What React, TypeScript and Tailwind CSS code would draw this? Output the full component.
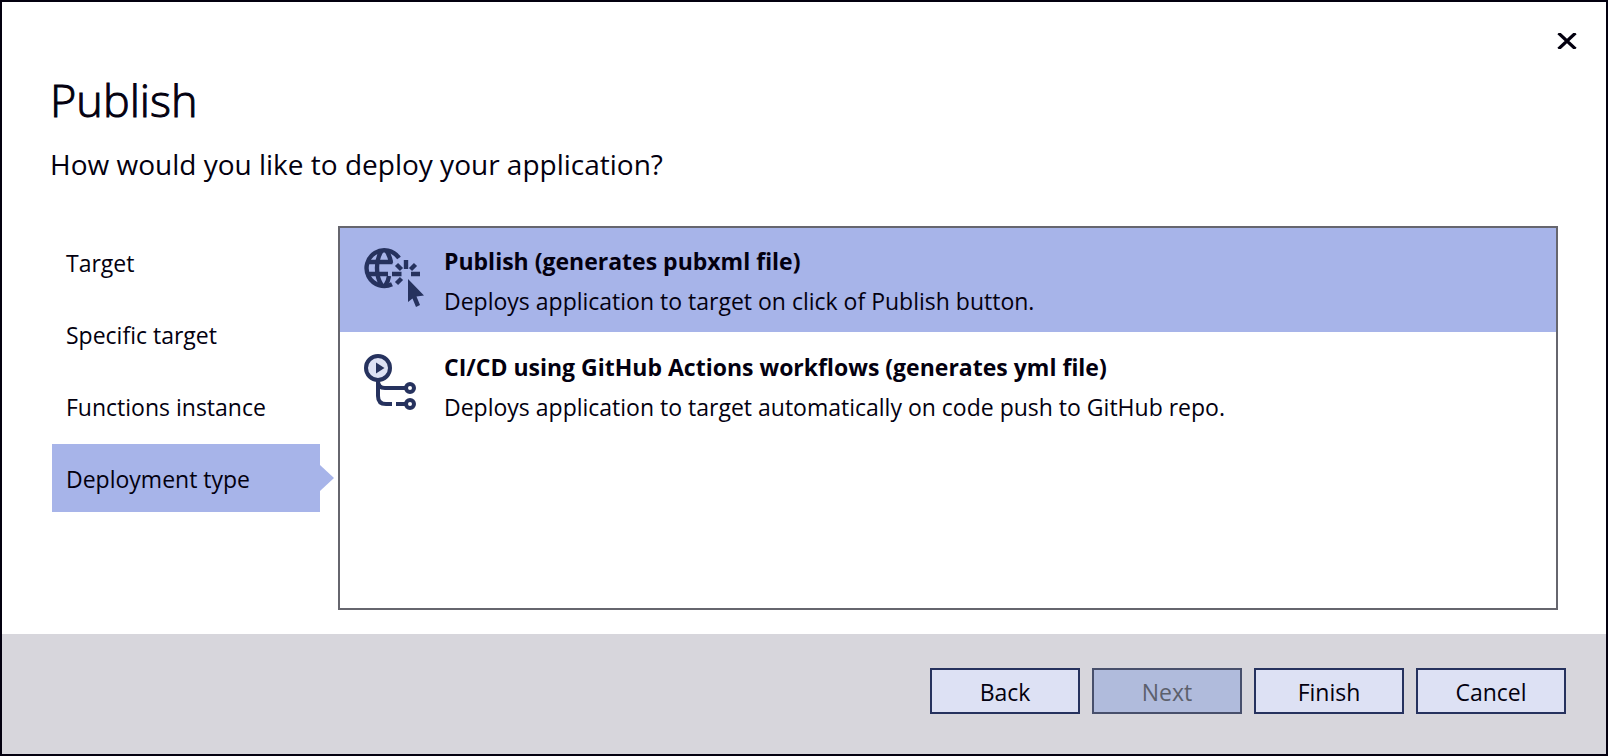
import type { ReactNode } from "react";

function PublishIcon() {
  return (
    <svg viewBox="0 0 60 60" className="size-[60px] shrink-0" fill="none" stroke="#26325e" strokeWidth="4.400" aria-hidden="true">
      <path d="M35 10A17.800 17.800 0 1 0 28 36.200" />
      <path d="M3 14H28.500M2 26H24" />
      <path d="M17.500 3C11.500 12 11.500 28 17.500 37" />
      <path d="M22.500 3C25 6.500 26.300 10 27 15" />
      <path d="M25 28C24.500 31.500 23.500 34.500 21.500 37" />
      <path d="M42 12V21M28 26H37.500M47 26H56M32.500 16.500L37.500 21.500M51.500 16.500L46.500 21.500M32.500 35.500L37.500 30.500" />
      <path d="M44 31L60 47.500L52.500 48.500L56 57L52 59L48.500 50.500L44 54Z" fill="#26325e" stroke="none" />
    </svg>
  );
}

function WorkflowIcon() {
  return (
    <svg viewBox="0 0 60 60" className="size-[60px] shrink-0" fill="none" stroke="#26325e" strokeWidth="4" aria-hidden="true">
      <circle cx="14" cy="14" r="12" fill="#dde1f4" />
      <path d="M12 8.500L20.500 14L12 19.500Z" fill="#26325e" stroke="none" />
      <path d="M14 27V42Q14 50 22 50H28M32 50H41M14 27Q14 34 21 34H41" />
      <circle cx="46" cy="34" r="4" />
      <circle cx="46" cy="50" r="4" />
    </svg>
  );
}

const steps = ["Target", "Specific target", "Functions instance", "Deployment type"];

const options: { title: string; text: string; icon: ReactNode; selected: boolean }[] = [
  {
    title: "Publish (generates pubxml file)",
    text: "Deploys application to target on click of Publish button.",
    icon: <PublishIcon />,
    selected: true,
  },
  {
    title: "CI/CD using GitHub Actions workflows (generates yml file)",
    text: "Deploys application to target automatically on code push to GitHub repo.",
    icon: <WorkflowIcon />,
    selected: false,
  },
];

export default function App() {
  return (
    <div className="flex min-h-screen flex-col border-2 border-[#03000f] bg-white font-['Open_Sans','Noto_Sans',sans-serif] text-[23px] text-[#03000f]">
      <header className="flex items-start justify-between pr-[27px] pl-12">
        <div className="pt-[67px]">
          <h1 className="text-[45px] leading-[62px] font-light [-webkit-text-stroke:1px_#03000f]">Publish</h1>
          <p className="mt-[13px] text-[28px] leading-10">How would you like to deploy your application?</p>
        </div>
        <button type="button" aria-label="Close" className="mt-[27px] flex size-6 items-center justify-center">
          <svg viewBox="0 0 20 16" className="h-4 w-5" stroke="#03000f" strokeWidth="3.200" aria-hidden="true">
            <path d="M1.500 0L18.500 16M18.500 0L1.500 16" />
          </svg>
        </button>
      </header>

      <main className="mt-[42px] mr-12 mb-6 ml-[50px] flex grow gap-[18px]">
        <nav aria-label="Publish steps" className="flex w-[268px] shrink-0 flex-col gap-1 pt-0.5">
          {steps.map((step) => {
            const current = step === "Deployment type";
            return (
              <button
                key={step}
                type="button"
                aria-current={current ? "step" : undefined}
                className={`relative h-[68px] px-3.5 pt-0.5 text-left ${current ? "bg-[#a7b4e9]" : ""}`}
              >
                {step}
                {current && (
                  <svg viewBox="0 0 14 26" className="absolute top-[21px] left-full h-[26px] w-3.5" fill="#a7b4e9" aria-hidden="true">
                    <path d="M0 0L14 13L0 26Z" />
                  </svg>
                )}
              </button>
            );
          })}
        </nav>

        <div role="listbox" aria-label="Deployment type" className="flex min-w-0 grow flex-col gap-0.5 border-2 border-[#66666e]">
          {options.map((option) => (
            <button
              key={option.title}
              type="button"
              role="option"
              aria-selected={option.selected}
              className={`flex h-[104px] gap-5 px-6 text-left ${option.selected ? "bg-[#a7b4e9]" : ""}`}
            >
              <span className="pt-5">{option.icon}</span>
              <span className="flex flex-col pt-[13px] leading-10">
                <span className="font-bold">{option.title}</span>
                <span>{option.text}</span>
              </span>
            </button>
          ))}
        </div>
      </main>

      <footer className="flex h-[120px] shrink-0 items-start justify-end gap-3 bg-[#d7d6dc] pt-[34px] pr-10">
        <button type="button" className="h-[46px] w-[150px] border-2 border-[#26325e] bg-[#dde1f4] pt-0.5">Back</button>
        <button type="button" disabled className="h-[46px] w-[150px] border-2 border-[#474f6b] bg-[#b0bbdc] pt-0.5 text-[#5c606c]">Next</button>
        <button type="button" className="h-[46px] w-[150px] border-2 border-[#26325e] bg-[#dde1f4] pt-0.5">Finish</button>
        <button type="button" className="h-[46px] w-[150px] border-2 border-[#26325e] bg-[#dde1f4] pt-0.5">Cancel</button>
      </footer>
    </div>
  );
}
